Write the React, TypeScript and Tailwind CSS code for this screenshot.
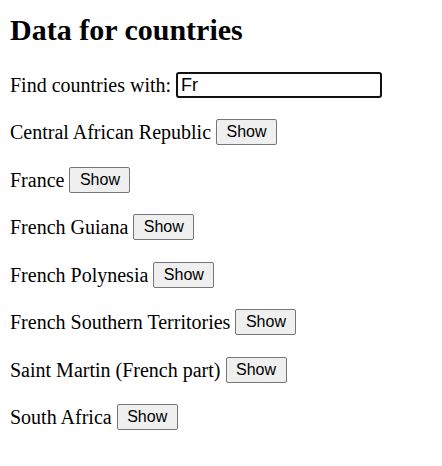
export default function App() {
  const countries = [
    "Central African Republic",
    "France",
    "French Guiana",
    "French Polynesia",
    "French Southern Territories",
    "Saint Martin (French part)",
    "South Africa",
  ];
  const serif = { fontFamily: '"Liberation Serif", "Times New Roman", serif' };
  const sans = { fontFamily: '"Liberation Sans", Arial, sans-serif' };
  return (
    <div className="min-h-[466px] bg-white text-black p-2 text-[20px]" style={serif}>
      <h1 className="text-[30px] font-bold leading-[35px] mt-[4px] pl-[2px]">Data for countries</h1>
      <div className="mt-[25px] flex items-center h-[26px] pl-[2px]">
        <span>Find countries with:</span>
        <span className="w-[5px]" />
        <input
          defaultValue="Fr"
          className="w-[206px] h-[26px] border-2 border-[#101010] rounded-[3px] px-[3px] text-[18px] outline-none"
          style={sans}
        />
      </div>
      <div className="mt-[21px] flex flex-col gap-[21.5px] pl-[2px]">
        {countries.map((c) => (
          <div key={c} className="flex items-center h-[26px]">
            <span>{c}</span>
            <span className="w-[5px]" />
            <button
              className="h-[26px] px-[9.5px] bg-[#efefef] border border-[#767676] rounded-[2px] text-[16px] leading-none"
              style={sans}
            >
              Show
            </button>
          </div>
        ))}
      </div>
    </div>
  );
}
